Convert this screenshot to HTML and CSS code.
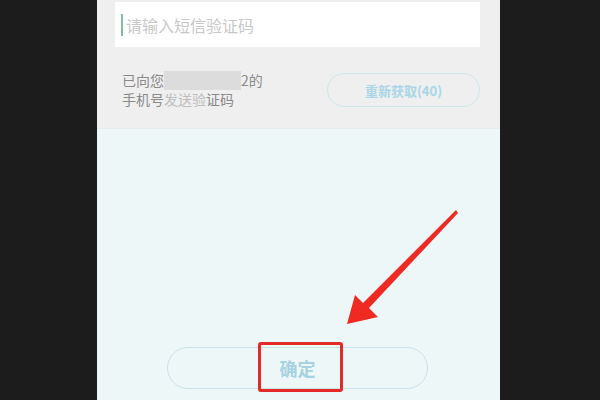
FILE: index.html
```html
<!DOCTYPE html>
<html lang="zh">
<head>
<meta charset="utf-8">
<link rel="stylesheet" href="styles.css">
</head>
<body>
<div class="screen">
  <div class="top">
    <div class="input">
      <span class="cursor"></span>
      <span class="placeholder">请输入短信验证码</span>
    </div>
    <div class="info">
      <div class="msg">
        <div class="line">已向您<span class="blur"></span>2的</div>
        <div class="line">手机号<span class="faded">发送验</span>证码</div>
      </div>
      <div class="resend">重新获取(40)</div>
    </div>
  </div>
  <div class="bottom">
    <div class="confirm">确定</div>
  </div>
  <div class="highlight"></div>
  <svg class="arrow" width="140" height="130" viewBox="0 0 140 130">
    <path d="M128 10 L130 13 L41 108 L50 117 L19 124 L27 95 L35 103 Z" fill="#ee2a22"/>
  </svg>
</div>
</body>
</html>
```
FILE: styles.css
```css
html, body {
  margin: 0;
  padding: 0;
  background: #1c1c1c;
  height: 100%;
}
body {
  font-family: "Noto Sans CJK SC", "Noto Sans", sans-serif;
}
.screen {
  position: relative;
  width: 403px;
  height: 400px;
  margin-left: 97px;
  display: flex;
  flex-direction: column;
  background: #eef7f7;
  overflow: hidden;
}
.top {
  background: #efefef;
  height: 129px;
  padding: 2px 20px 0 18px;
  box-sizing: border-box;
  border-bottom: 1px solid #e8eeee;
}
.input {
  background: #ffffff;
  height: 45px;
  display: flex;
  align-items: center;
  padding-left: 6px;
}
.cursor {
  width: 2px;
  height: 22px;
  background: #84bba3;
  margin-right: 3px;
}
.placeholder {
  font-size: 16px;
  color: #c8c8c8;
}
.info {
  display: flex;
  justify-content: space-between;
  align-items: center;
  margin-top: 24px;
  padding-left: 7px;
}
.msg {
  font-size: 14px;
  line-height: 19px;
  color: #8a8a8a;
}
.line {
  display: flex;
  align-items: center;
  white-space: nowrap;
}
.blur {
  display: inline-block;
  width: 77px;
  height: 19px;
  background: #dcdcdc;
}
.faded {
  color: #bdbdbd;
}
.resend {
  width: 153px;
  height: 34px;
  box-sizing: border-box;
  border: 1.5px solid #cfe6ec;
  border-radius: 17px;
  display: flex;
  align-items: center;
  justify-content: center;
  font-size: 13px;
  color: #a8d6e6;
  font-weight: bold;
}
.bottom {
  flex: 1;
  display: flex;
  align-items: flex-end;
  justify-content: center;
  padding-bottom: 11px;
}
.confirm {
  width: 261px;
  height: 42px;
  margin-right: 2px;
  box-sizing: border-box;
  border: 1.5px solid #c9e2e7;
  border-radius: 21px;
  display: flex;
  align-items: center;
  justify-content: center;
  font-size: 18px;
  color: #a6d2e2;
  font-weight: bold;
}
.highlight {
  position: absolute;
  left: 161px;
  top: 342px;
  width: 85px;
  height: 50px;
  box-sizing: border-box;
  border: 3px solid #e32a26;
  border-radius: 3px;
}
.arrow {
  position: absolute;
  left: 231px;
  top: 200px;
}
```
